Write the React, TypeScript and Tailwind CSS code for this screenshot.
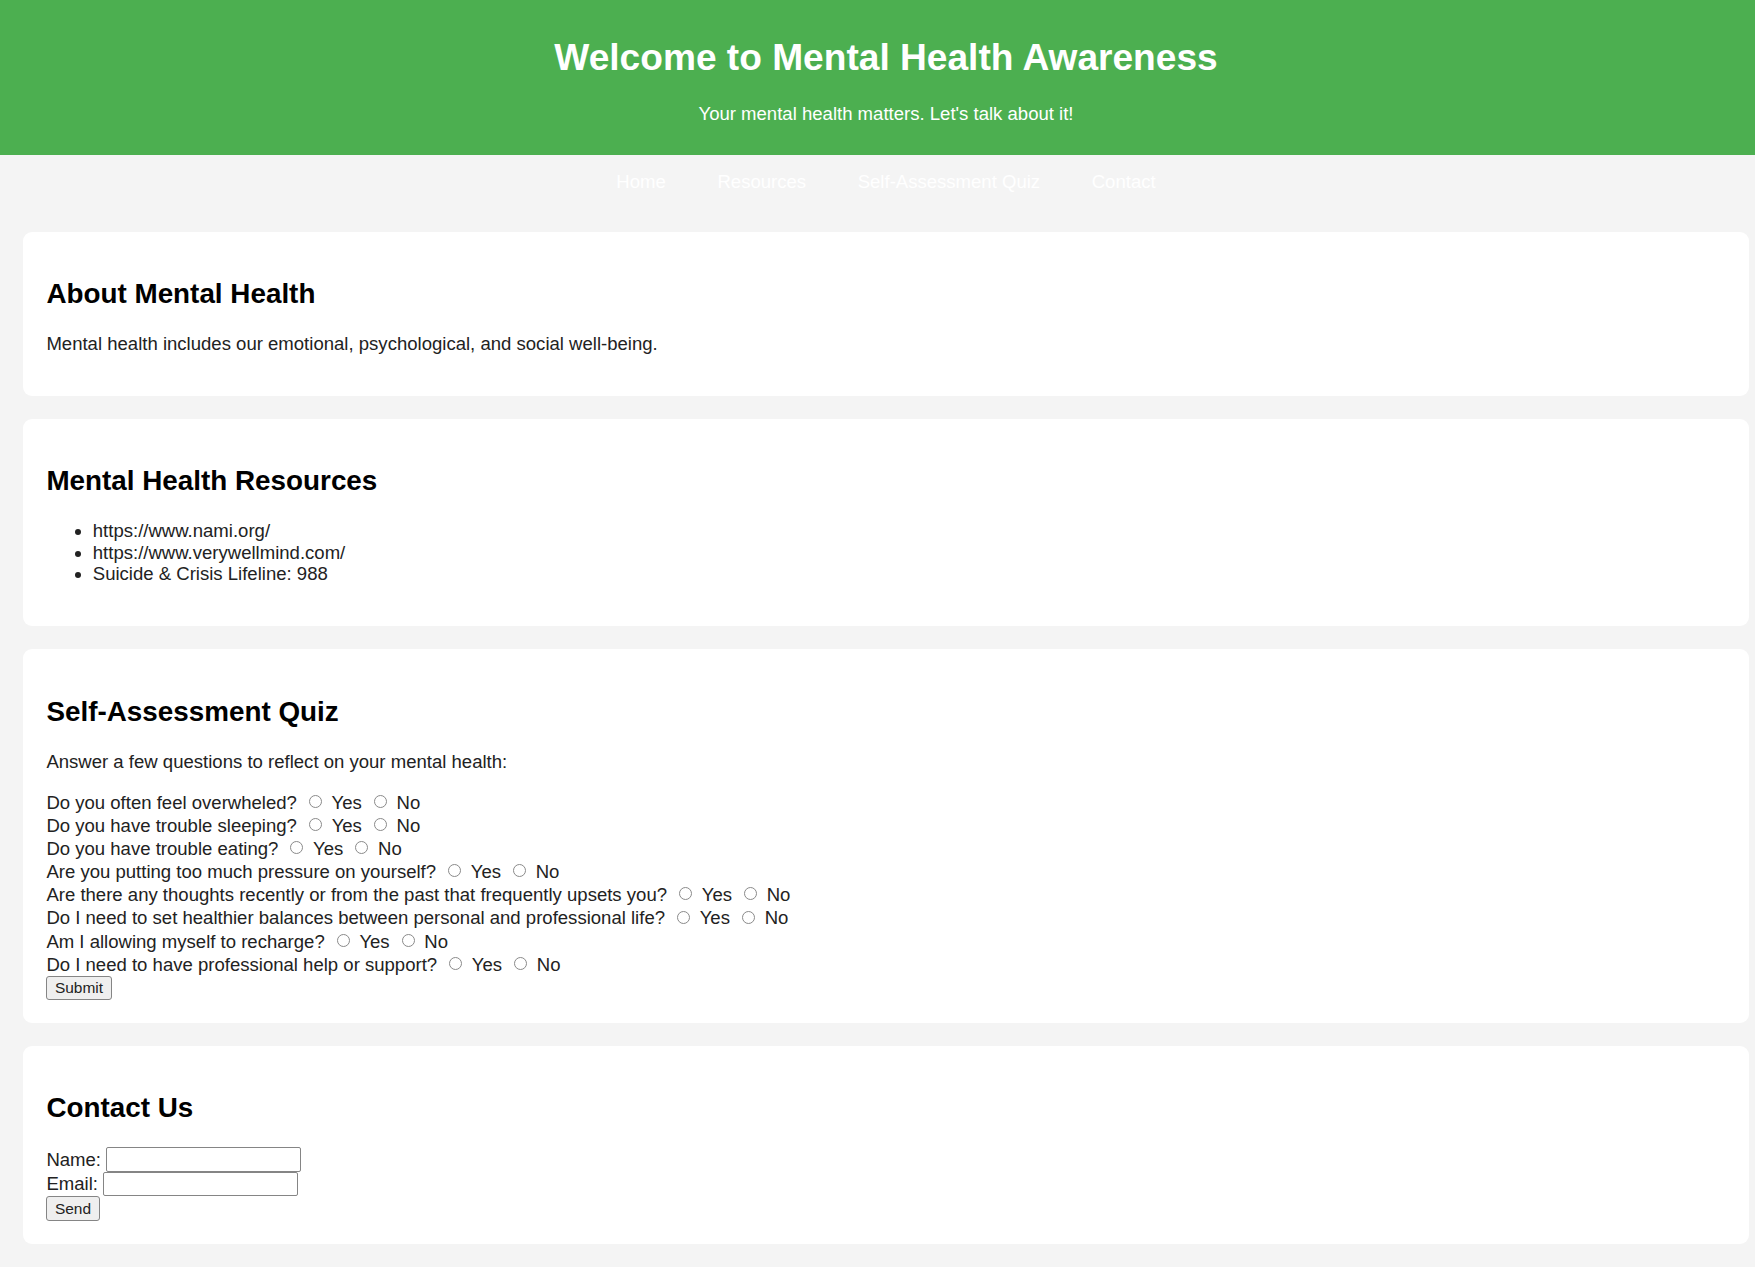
import React from "react";

const questions = [
  "Do you often feel overwheled?",
  "Do you have trouble sleeping?",
  "Do you have trouble eating?",
  "Are you putting too much pressure on yourself?",
  "Are there any thoughts recently or from the past that frequently upsets you?",
  "Do I need to set healthier balances between personal and professional life?",
  "Am I allowing myself to recharge?",
  "Do I need to have professional help or support?",
];

function Radio() {
  return (
    <span className="ml-[12px] mr-[9.7px] inline-block h-[13px] w-[13px] shrink-0 -translate-y-[1px] rounded-full border border-[#8a8a8a] bg-white" />
  );
}

function Card({ title, children }: { title: string; children: React.ReactNode }) {
  return (
    <section className="flow-root rounded-[9px] bg-white px-[23.2px] py-[23.2px]">
      <h2 className="my-[23.1px] text-[27.84px] font-bold leading-[1.149] text-black">{title}</h2>
      {children}
    </section>
  );
}

export default function App() {
  return (
    <div className="w-full overflow-hidden bg-[#f4f4f4] font-[family-name:'Liberation_Sans',Arial,sans-serif] text-[18.56px] leading-[1.149] text-[#222]">
      <div className="w-[1772px]">
        <header className="flow-root bg-[#4caf50] pt-[11px] pb-[12px] text-center text-white">
          <h1 className="my-[24.9px] text-[37.12px] font-bold leading-[1.149]">
            Welcome to Mental Health Awareness
          </h1>
          <p className="my-[18.56px]">Your mental health matters. Let's talk about it!</p>
        </header>

        <nav className="flex h-[53px] items-center justify-center">
          <ul className="flex gap-[51.6px] text-white">
            <li><a href="#about">Home</a></li>
            <li><a href="#resources">Resources</a></li>
            <li><a href="#quiz">Self-Assessment Quiz</a></li>
            <li><a href="#contact">Contact</a></li>
          </ul>
        </nav>

        <main className="flex flex-col gap-[23.2px] px-[23.2px] pt-[23.2px] pb-[23.2px]">
          <Card title="About Mental Health">
            <p className="my-[18.56px]">
              Mental health includes our emotional, psychological, and social well-being.
            </p>
          </Card>

          <Card title="Mental Health Resources">
            <ul className="my-[18.56px] list-disc pl-[46.4px]">
              <li>https://www.nami.org/</li>
              <li>https://www.verywellmind.com/</li>
              <li>Suicide &amp; Crisis Lifeline: 988</li>
            </ul>
          </Card>

          <Card title="Self-Assessment Quiz">
            <p className="my-[18.56px]">Answer a few questions to reflect on your mental health:</p>
            <form onSubmit={(e) => e.preventDefault()}>
              {questions.map((q) => (
                <div key={q} className="flex h-[23.2px] items-center whitespace-nowrap">
                  <span>{q}</span>
                  <Radio />
                  <span>Yes</span>
                  <Radio />
                  <span>No</span>
                </div>
              ))}
              <button
                type="submit"
                className="flex h-[23.6px] items-center rounded-[3px] border border-[#858585] bg-[#efefef] px-[7.5px] text-[15.47px] leading-none text-[#222]"
              >
                Submit
              </button>
            </form>
          </Card>

          <Card title="Contact Us">
            <form onSubmit={(e) => e.preventDefault()}>
              <div className="flex h-[24.4px] items-center gap-[5.2px]">
                <span>Name:</span>
                <input
                  type="text"
                  className="h-[24.4px] w-[195px] rounded-[2px] border border-[#858585] bg-white px-[2px] text-[15.47px]"
                />
              </div>
              <div className="flex h-[24.4px] items-center gap-[5.2px]">
                <span>Email:</span>
                <input
                  type="email"
                  className="h-[24.4px] w-[195px] rounded-[2px] border border-[#858585] bg-white px-[2px] text-[15.47px]"
                />
              </div>
              <button
                type="submit"
                className="flex h-[24.4px] items-center rounded-[3px] border border-[#858585] bg-[#efefef] px-[7.5px] text-[15.47px] leading-none text-[#222]"
              >
                Send
              </button>
            </form>
          </Card>
        </main>
      </div>
    </div>
  );
}
